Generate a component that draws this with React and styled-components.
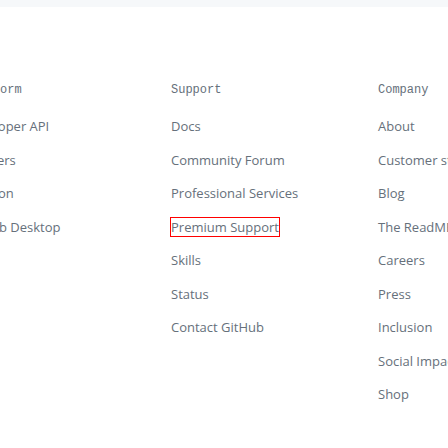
import styled, { createGlobalStyle } from "styled-components";

// 푸터 링크 영역 재현
const GlobalStyle = createGlobalStyle`
  html, body {
    margin: 0;
    padding: 0;
    background: #ffffff;
    overflow: hidden;
  }
`;

const columns = [
  {
    title: "Platform",
    links: ["Developer API", "Partners", "Electron", "GitHub Desktop"],
  },
  {
    title: "Support",
    links: [
      "Docs",
      "Community Forum",
      "Professional Services",
      "Premium Support",
      "Skills",
      "Status",
      "Contact GitHub",
    ],
  },
  {
    title: "Company",
    links: [
      "About",
      "Customer stories",
      "Blog",
      "The ReadME Project",
      "Careers",
      "Press",
      "Inclusion",
      "Social Impact",
      "Shop",
    ],
  },
];

const TopBand = styled.div`
  height: 7px;
  background-color: #f6f8fa;
`;

const Footer = styled.footer`
  width: 448px;
  height: 441px;
  overflow: hidden;
  padding-top: 73px;
  box-sizing: border-box;
`;

const Grid = styled.div`
  display: grid;
  grid-template-columns: repeat(3, 207px);
  margin-left: -36px;
`;

const Column = styled.nav`
  display: flex;
  flex-direction: column;
  white-space: nowrap;
`;

const Heading = styled.h3`
  margin: 0 0 15px;
  font-family: "Liberation Mono", "DejaVu Sans Mono", monospace;
  font-size: 12px;
  font-weight: 400;
  line-height: 21px;
  color: #66707b;
`;

const List = styled.ul`
  list-style: none;
  margin: 0;
  padding: 0;
`;

const Item = styled.li`
  height: 33.5px;
  line-height: 21px;
  font-family: "Open Sans", "Noto Sans", sans-serif;
  font-size: 13px;
  color: #66707b;
`;

const Link = styled.a`
  color: inherit;
  text-decoration: none;
  outline: ${(props) => (props.$focused ? "1px solid #ff0000" : "none")};
`;

const App = () => {
  return (
    <>
      <GlobalStyle />
      <TopBand />
      <Footer>
        <Grid>
          {columns.map((col) => (
            <Column key={col.title}>
              <Heading>{col.title}</Heading>
              <List>
                {col.links.map((link) => (
                  <Item key={link}>
                    <Link href="#" $focused={link === "Premium Support"}>
                      {link}
                    </Link>
                  </Item>
                ))}
              </List>
            </Column>
          ))}
        </Grid>
      </Footer>
    </>
  );
};

export default App;
